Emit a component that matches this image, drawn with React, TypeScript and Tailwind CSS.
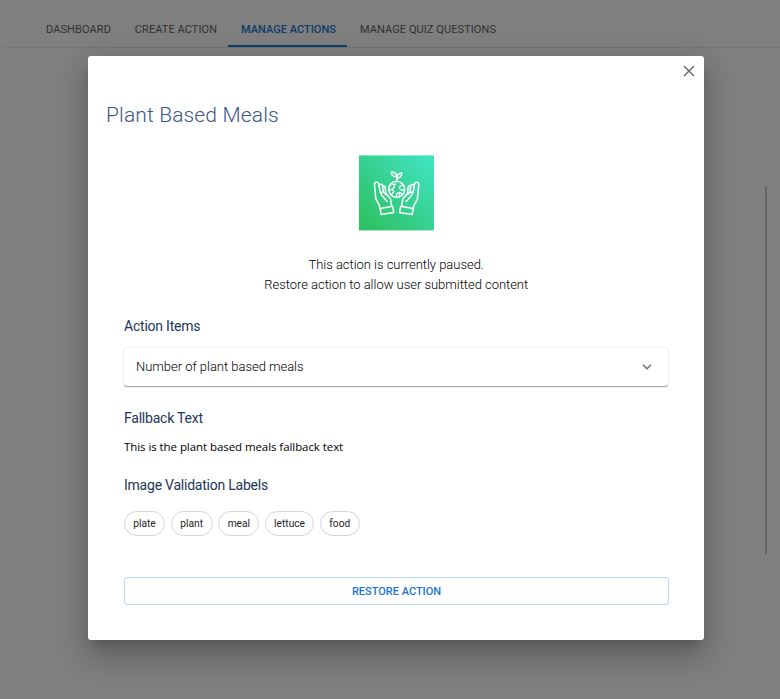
const tabs = [
  { label: "Dashboard", active: false, width: "w-[89px]" },
  { label: "Create Action", active: false, width: "w-[106px]" },
  { label: "Manage Actions", active: true, width: "w-[119px]" },
  { label: "Manage Quiz Questions", active: false, width: "w-[160px]" },
];

const labels = [
  { text: "plate", width: "w-[41px]" },
  { text: "plant", width: "w-[42px]" },
  { text: "meal", width: "w-[41px]" },
  { text: "lettuce", width: "w-[49px]" },
  { text: "food", width: "w-[40px]" },
];

function Hand() {
  return (
    <g>
      <path d="M21.2 54.3 L20.4 50.1 L16.9 43.8 L15.5 29.5 C15.3 26.5 19.4 25.9 19.9 28.9 L21.2 37" />
      <path d="M20.2 31.5 C20 28.4 23.1 28 23.6 30.6 L24.4 36.2 M23.4 32 C23.7 29.8 26 30.2 26.2 32.3 L26.7 37.9 L31.4 43.5 L32.7 50.9" />
      <path d="M28.2 46.2 L22.9 40.2 C20.8 37.8 22.8 35.4 25 37.5 L27 39.4" />
      <path d="M21.3 53.1 L33.6 51 L34.8 57.3 L22 59.2 Z" />
    </g>
  );
}

function ActionArtwork() {
  return (
    <svg viewBox="0 0 75 76" className="h-[76px] w-[75px]" fill="none" stroke="#fff" strokeWidth="1.5" strokeLinecap="round" strokeLinejoin="round">
      <defs>
        <linearGradient id="leafy" x1="0" y1="1" x2="1" y2="0">
          <stop offset="0" stopColor="#2dbe5b" />
          <stop offset="1" stopColor="#41e5c6" />
        </linearGradient>
      </defs>
      <rect y="0.4" width="75" height="75" fill="url(#leafy)" stroke="none" />
      <g transform="translate(0 0.3)">
        <Hand />
        <g transform="translate(75.3 0) scale(-1 1)">
          <Hand />
        </g>
        <circle cx="37.7" cy="34" r="8" />
        <path d="M37.8 26 V21.5 M37.6 21.4 C34 21.5 32.4 19.8 32.3 16.8 C35.8 16.7 37.7 18.2 37.6 21.4 Z M38 22.8 C38.1 19.3 39.6 17.8 42.8 17.7 C42.6 21 41.2 22.7 38 22.8 Z" />
        <path d="M32.4 28.3 L35 29.5 L36.9 28.6 M35 29.5 L35.4 32 L33.2 34 L34.8 36.4 L32.4 39.4 M30 34.5 L33.2 34 M44.6 30.2 L41.2 30.5 L40.4 33 L42.2 34.9 L45.5 34.4 M37.3 41.7 L37.8 38.3 L40.6 37 L43.2 38.9 M40.4 41.3 L40.6 37" strokeWidth="1.2" />
      </g>
    </svg>
  );
}

export default function App() {
  return (
    <div className="relative h-[699px] w-[780px] overflow-hidden bg-[#808080] font-['Roboto',sans-serif]">
      <nav className="ml-1 flex h-12 border-b border-[#757575] pl-[29px]">
        {tabs.map((tab) => (
          <div
            key={tab.label}
            className={`flex h-[47px] shrink-0 items-center justify-center whitespace-nowrap pl-[2px] pt-4 text-[11px] uppercase ${tab.width} ${tab.active ? "border-b-2 border-[#0e3f70] font-medium tracking-[0.01px] text-[#0d3c69]" : "border-b-2 border-transparent font-normal tracking-[0.08px] text-[#303030]"}`}
          >
            {tab.label}
          </div>
        ))}
      </nav>
      <div className="absolute left-[765px] top-[186px] h-[368px] w-[2px] bg-[#666]" />

      <section className="absolute left-[88px] top-[56px] flex h-[584.4px] w-[616.4px] flex-col rounded-[3px] bg-white shadow-[0_9px_12px_-6px_rgba(0,0,0,0.2),0_19px_30px_2px_rgba(0,0,0,0.14),0_7px_37px_6px_rgba(0,0,0,0.12)]">
        <div className="flex h-[30px] items-center justify-end pr-[9.4px]">
          <svg viewBox="0 0 12 12" className="size-3" stroke="#6d6d6d" strokeWidth="1.5">
            <path d="M1 1 L11 11 M11 1 L1 11" />
          </svg>
        </div>
        <h1 className="ml-[18px] mt-[13px] h-8 text-[21px] font-light leading-8 tracking-[0.14px] text-[#3d5680]">Plant Based Meals</h1>
        <div className="mt-6 flex justify-center">
          <ActionArtwork />
        </div>
        <p className="mt-6 text-center text-[13px] font-light leading-5 tracking-[-0.03px] text-black">
          This action is currently paused.
          <br />
          Restore action to allow user submitted content
        </p>
        <div className="ml-9 flex w-[545px] flex-col">
          <h2 className="mt-[21px] h-5 text-[14px] leading-5 tracking-[-0.22px] text-[#1d3657]">Action Items</h2>
          <div className="mr-[0.6px] mt-3 flex h-[38px] items-center justify-between rounded-[3px] bg-white pl-3 pr-4 text-[13px] font-light tracking-[-0.03px] text-black shadow-[0_1.6px_0.8px_-0.8px_rgba(0,0,0,0.2),0_0.8px_0.8px_0_rgba(0,0,0,0.14),0_0.8px_2.4px_0_rgba(0,0,0,0.12)]">
            <span>Number of plant based meals</span>
            <svg viewBox="0 0 10 6" className="h-1.5 w-2.5" fill="none" stroke="#666" strokeWidth="1.4">
              <path d="M1 .7 L5 4.7 L9 .7" />
            </svg>
          </div>
          <h2 className="mt-[22px] h-5 text-[14px] leading-5 tracking-[-0.22px] text-[#1d3657]">Fallback Text</h2>
          <p className="mt-[9px] h-5 font-['Open_Sans',sans-serif] text-[11.5px] leading-5 tracking-[-0.07px] text-black">This is the plant based meals fallback text</p>
          <h2 className="mt-[18px] h-5 text-[14px] leading-5 tracking-[-0.23px] text-[#1d3657]">Image Validation Labels</h2>
          <div className="mt-4 flex gap-[5.7px]">
            {labels.map((label) => (
              <span key={label.text} className={`flex h-[25px] items-center justify-center rounded-full border border-[#d5d5d5] text-[10.2px] text-[#222] ${label.width}`}>
                {label.text}
              </span>
            ))}
          </div>
          <button className="mt-[41px] h-7 rounded-[3px] border border-[#bad7f3] pt-[2px] text-[11px] font-medium text-[#1976d2]">RESTORE ACTION</button>
        </div>
      </section>
    </div>
  );
}
